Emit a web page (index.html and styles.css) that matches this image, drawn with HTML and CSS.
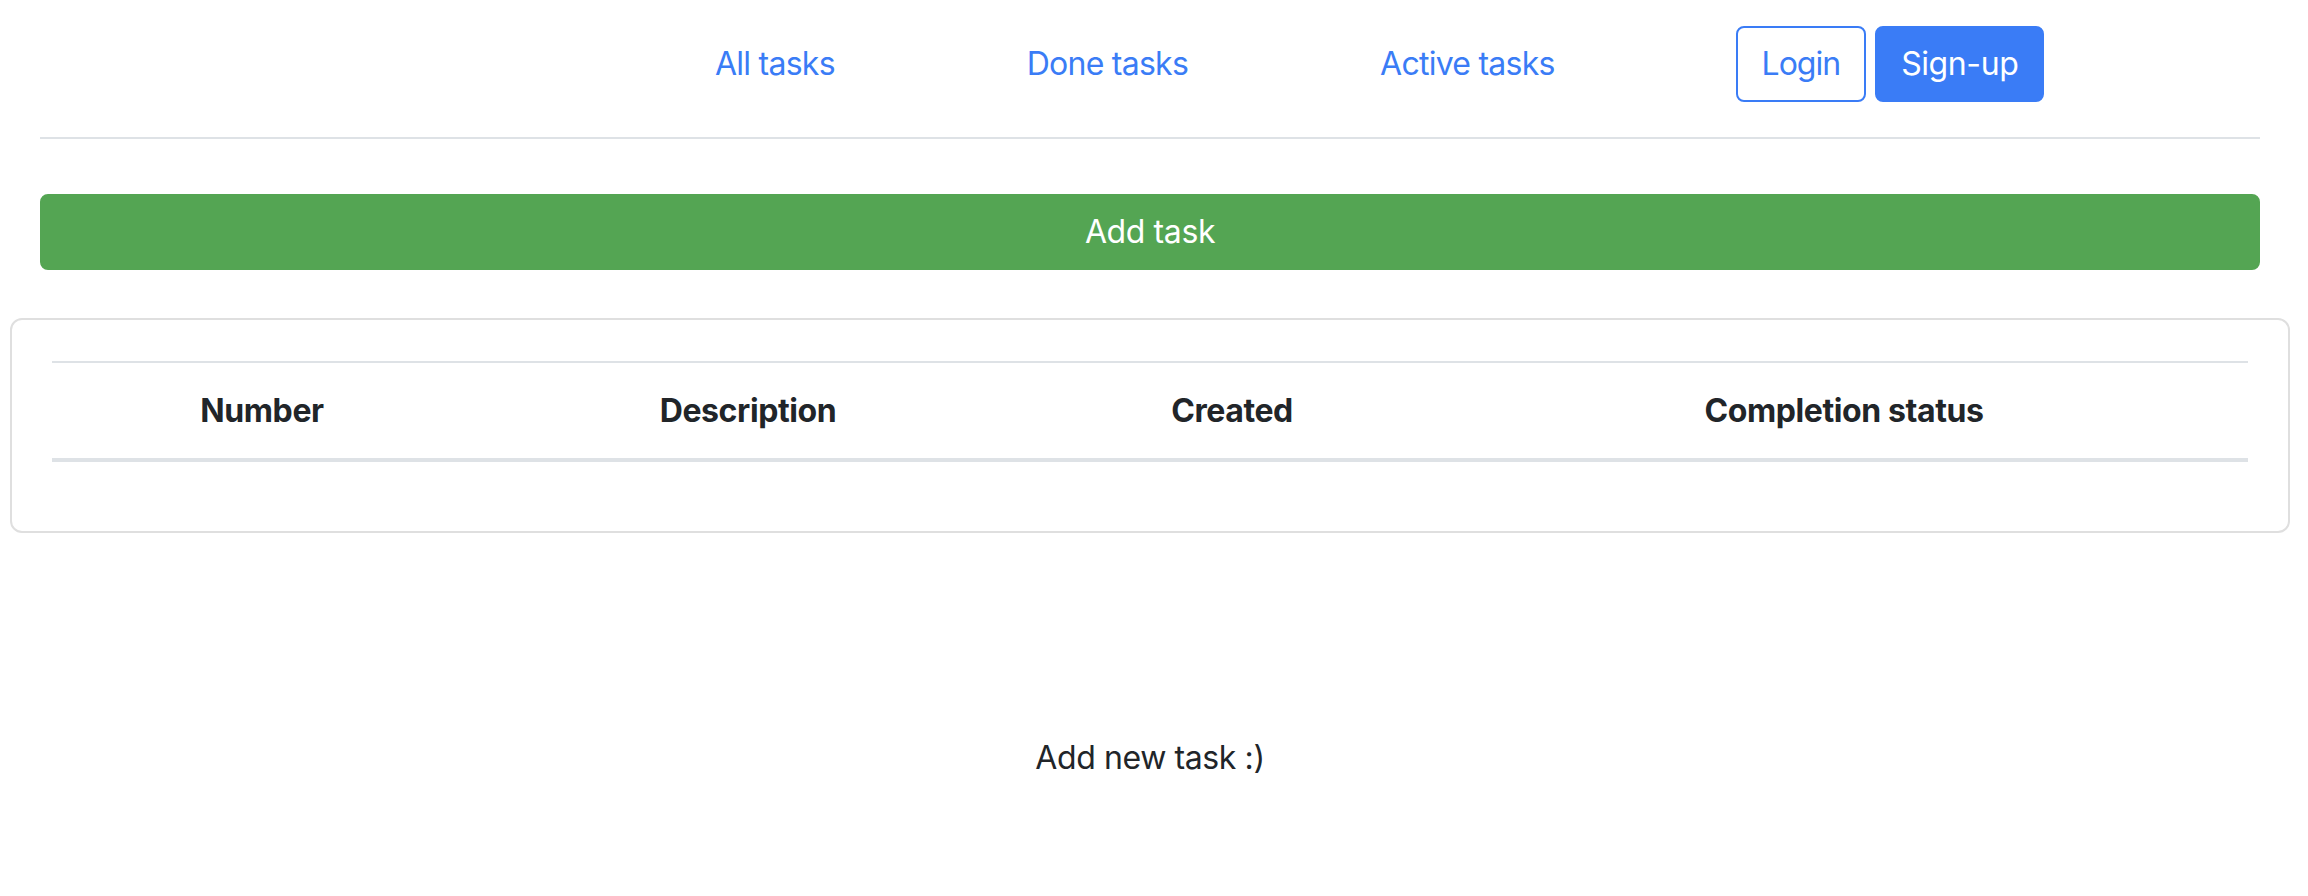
FILE: index.html
```html
<!DOCTYPE html>
<html lang="en">
<head>
<meta charset="utf-8">
<title>Tasks</title>
<link rel="stylesheet" href="styles.css">
</head>
<body>
<div class="page">
  <header class="topbar">
    <nav class="links">
      <a href="#" class="link">All tasks</a>
      <a href="#" class="link">Done tasks</a>
      <a href="#" class="link">Active tasks</a>
    </nav>
    <div class="auth">
      <button class="btn btn-outline">Login</button>
      <button class="btn btn-primary">Sign-up</button>
    </div>
  </header>
  <div class="add-wrap">
    <button class="btn btn-success btn-block">Add task</button>
  </div>
  <section class="card">
    <table class="tasks">
      <colgroup>
        <col class="c1"><col class="c2"><col class="c3"><col class="c4">
      </colgroup>
      <thead>
        <tr>
          <th>Number</th>
          <th>Description</th>
          <th>Created</th>
          <th>Completion status</th>
        </tr>
      </thead>
      <tbody></tbody>
    </table>
  </section>
  <p class="empty">Add new task :)</p>
</div>
</body>
</html>
```
FILE: styles.css
```css
html, body {
  margin: 0;
  padding: 0;
  background: #ffffff;
}
body {
  font-family: Inter, "Liberation Sans", sans-serif;
  font-size: 32px;
  line-height: 48px;
  color: #212529;
}
.page {
  width: 2300px;
}
.topbar {
  margin: 0 40px;
  padding: 26px 0 35px;
  border-bottom: 2px solid #dee2e6;
  display: flex;
  align-items: center;
}
.links {
  display: flex;
  gap: 192px;
  margin-left: 675px;
}
.link {
  color: #3a7cf6;
  text-decoration: none;
  letter-spacing: -0.75px;
}
.auth {
  display: flex;
  gap: 9px;
  margin-left: 181px;
}
.btn {
  font-family: inherit;
  font-size: 32px;
  line-height: 48px;
  padding: 12px 24px;
  border: 2px solid transparent;
  border-radius: 8px;
  letter-spacing: -0.4px;
  cursor: pointer;
}
.btn-outline {
  background: #ffffff;
  color: #3a7cf6;
  border-color: #3a7cf6;
  letter-spacing: -1px;
}
.btn-primary {
  background: #3a7cf6;
  color: #ffffff;
  border-color: #3a7cf6;
}
.add-wrap {
  margin: 55px 40px 0;
}
.btn-success {
  background: #54a553;
  border-color: #54a553;
  color: #ffffff;
}
.btn-block {
  display: block;
  width: 100%;
}
.card {
  margin: 48px 10px 0;
  border: 2px solid #dfdfdf;
  border-radius: 12px;
  padding: 41px 40px 69px;
}
.tasks {
  width: 100%;
  border-collapse: separate;
  border-spacing: 0;
  table-layout: fixed;
}
.c1 { width: 420px; }
.c2 { width: 552px; }
.c3 { width: 416px; }
.c4 { width: 808px; }
.tasks th {
  font-weight: 700;
  text-align: center;
  padding: 24px 0 23px;
  border-top: 2px solid #dee2e6;
  border-bottom: 4px solid #dee2e6;
  letter-spacing: -0.4px;
}
.empty {
  margin: 201px 0 0;
  text-align: center;
  letter-spacing: -0.4px;
}
```
